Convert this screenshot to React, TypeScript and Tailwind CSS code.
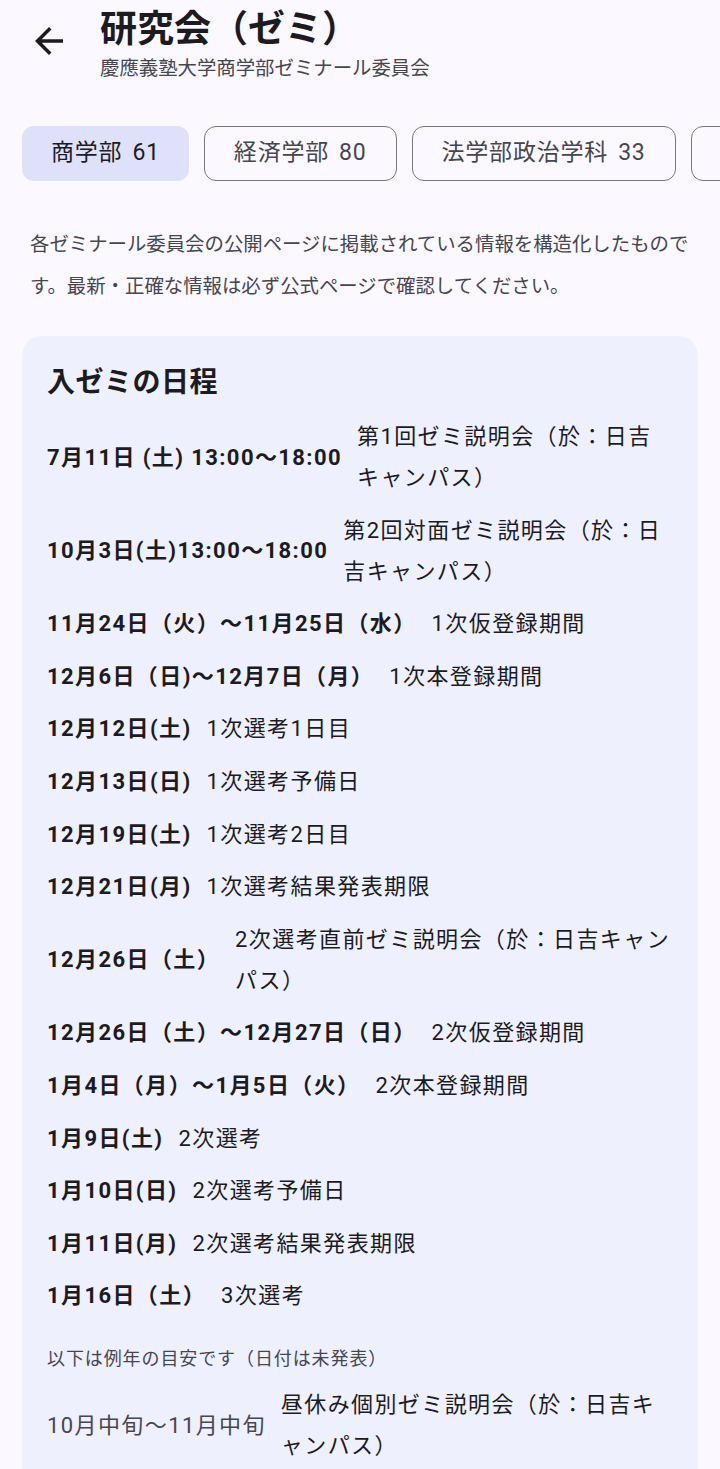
import React from "react";

type Row = {
  date: string;
  desc: string;
  muted?: boolean;
};

const rows: Row[] = [
  { date: "7月11日 (土) 13:00〜18:00", desc: "第1回ゼミ説明会（於：日吉キャンパス）" },
  { date: "10月3日(土)13:00〜18:00", desc: "第2回対面ゼミ説明会（於：日吉キャンパス）" },
  { date: "11月24日（火）〜11月25日（水）", desc: "1次仮登録期間" },
  { date: "12月6日（日)〜12月7日（月）", desc: "1次本登録期間" },
  { date: "12月12日(土)", desc: "1次選考1日目" },
  { date: "12月13日(日)", desc: "1次選考予備日" },
  { date: "12月19日(土)", desc: "1次選考2日目" },
  { date: "12月21日(月)", desc: "1次選考結果発表期限" },
  { date: "12月26日（土）", desc: "2次選考直前ゼミ説明会（於：日吉キャンパス）" },
  { date: "12月26日（土）〜12月27日（日）", desc: "2次仮登録期間" },
  { date: "1月4日（月）〜1月5日（火）", desc: "2次本登録期間" },
  { date: "1月9日(土)", desc: "2次選考" },
  { date: "1月10日(日)", desc: "2次選考予備日" },
  { date: "1月11日(月)", desc: "2次選考結果発表期限" },
  { date: "1月16日（土）", desc: "3次選考" },
];

const tentative: Row[] = [
  { date: "10月中旬〜11月中旬", desc: "昼休み個別ゼミ説明会（於：日吉キャンパス）", muted: true },
];

const chips = [
  { label: "商学部", count: 61, active: true },
  { label: "経済学部", count: 80 },
  { label: "法学部政治学科", count: 33 },
  { label: "法学部法律学科", count: 52 },
];

function ScheduleRow({ row }: { row: Row }) {
  return (
    <div className="flex items-center gap-[15px] leading-[41px] tracking-[1.4px]">
      <div
        className={
          row.muted
            ? "shrink-0 text-[22px] text-[#46464f]"
            : "shrink-0 text-[22px] font-bold text-[#1b1b21]"
        }
      >
        {row.date}
      </div>
      <div className="min-w-0 text-[22px] text-[#1b1b21]">{row.desc}</div>
    </div>
  );
}

export default function App() {
  return (
    <div
      className="min-h-[1469px] w-[720px] overflow-hidden bg-[#fcf8ff] text-[#1b1b21]"
      style={{ fontFamily: 'Roboto, "Noto Sans CJK JP", sans-serif' }}
    >
      {/* ヘッダー */}
      <div className="flex pt-[8px]">
        <div className="w-[100px] shrink-0 pl-[28px] pt-[12px]">
          <svg width="42" height="42" viewBox="0 0 24 24" fill="#1b1b21">
            <path d="M20 11H7.83l5.59-5.59L12 4l-8 8 8 8 1.41-1.41L7.83 13H20v-2z" />
          </svg>
        </div>
        <div className="flex flex-col">
          <h1 className="text-[37px] font-bold leading-[44px]">研究会（ゼミ）</h1>
          <p className="mt-[4px] text-[19.4px] leading-[26px] text-[#46464f]">
            慶應義塾大学商学部ゼミナール委員会
          </p>
        </div>
      </div>

      {/* 学部タブ */}
      <div className="mt-[44px] flex gap-[15px] overflow-hidden pl-[22px]">
        {chips.map((c) => (
          <div
            key={c.label}
            className={
              c.active
                ? "flex h-[55px] shrink-0 items-center gap-[10px] rounded-[12px] bg-[#dee1f9] px-[29px] text-[23px] tracking-[0.8px] text-[#1b1b21]"
                : "flex h-[55px] shrink-0 items-center gap-[10px] rounded-[12px] border-[1.5px] border-[#777680] px-[29px] text-[23px] tracking-[0.8px] text-[#46464f]"
            }
          >
            <span>{c.label}</span>
            <span>{c.count}</span>
          </div>
        ))}
      </div>

      {/* 説明 */}
      <p className="mt-[43px] px-[30px] text-[19.4px] leading-[42px] text-[#46464f]">
        各ゼミナール委員会の公開ページに掲載されている情報を構造化したものです。最新・正確な情報は必ず公式ページで確認してください。
      </p>

      {/* 日程カード */}
      <div className="mx-[22px] mt-[28px] rounded-[20px] bg-[#eef0fd] pb-[30px] pl-[25px] pr-[26px] pt-[29px]">
        <h2 className="text-[28px] font-bold leading-[36px] tracking-[0.5px]">入ゼミの日程</h2>
        <div className="mt-[15px] flex flex-col gap-[11.6px]">
          {rows.map((r) => (
            <ScheduleRow key={r.date + r.desc} row={r} />
          ))}
        </div>
        <p className="mt-[30px] text-[18px] leading-[26px] tracking-[0.9px] text-[#46464f]">
          以下は例年の目安です（日付は未発表）
        </p>
        <div className="mt-[12px] flex flex-col gap-[11.6px]">
          {tentative.map((r) => (
            <ScheduleRow key={r.date} row={r} />
          ))}
        </div>
      </div>
    </div>
  );
}
